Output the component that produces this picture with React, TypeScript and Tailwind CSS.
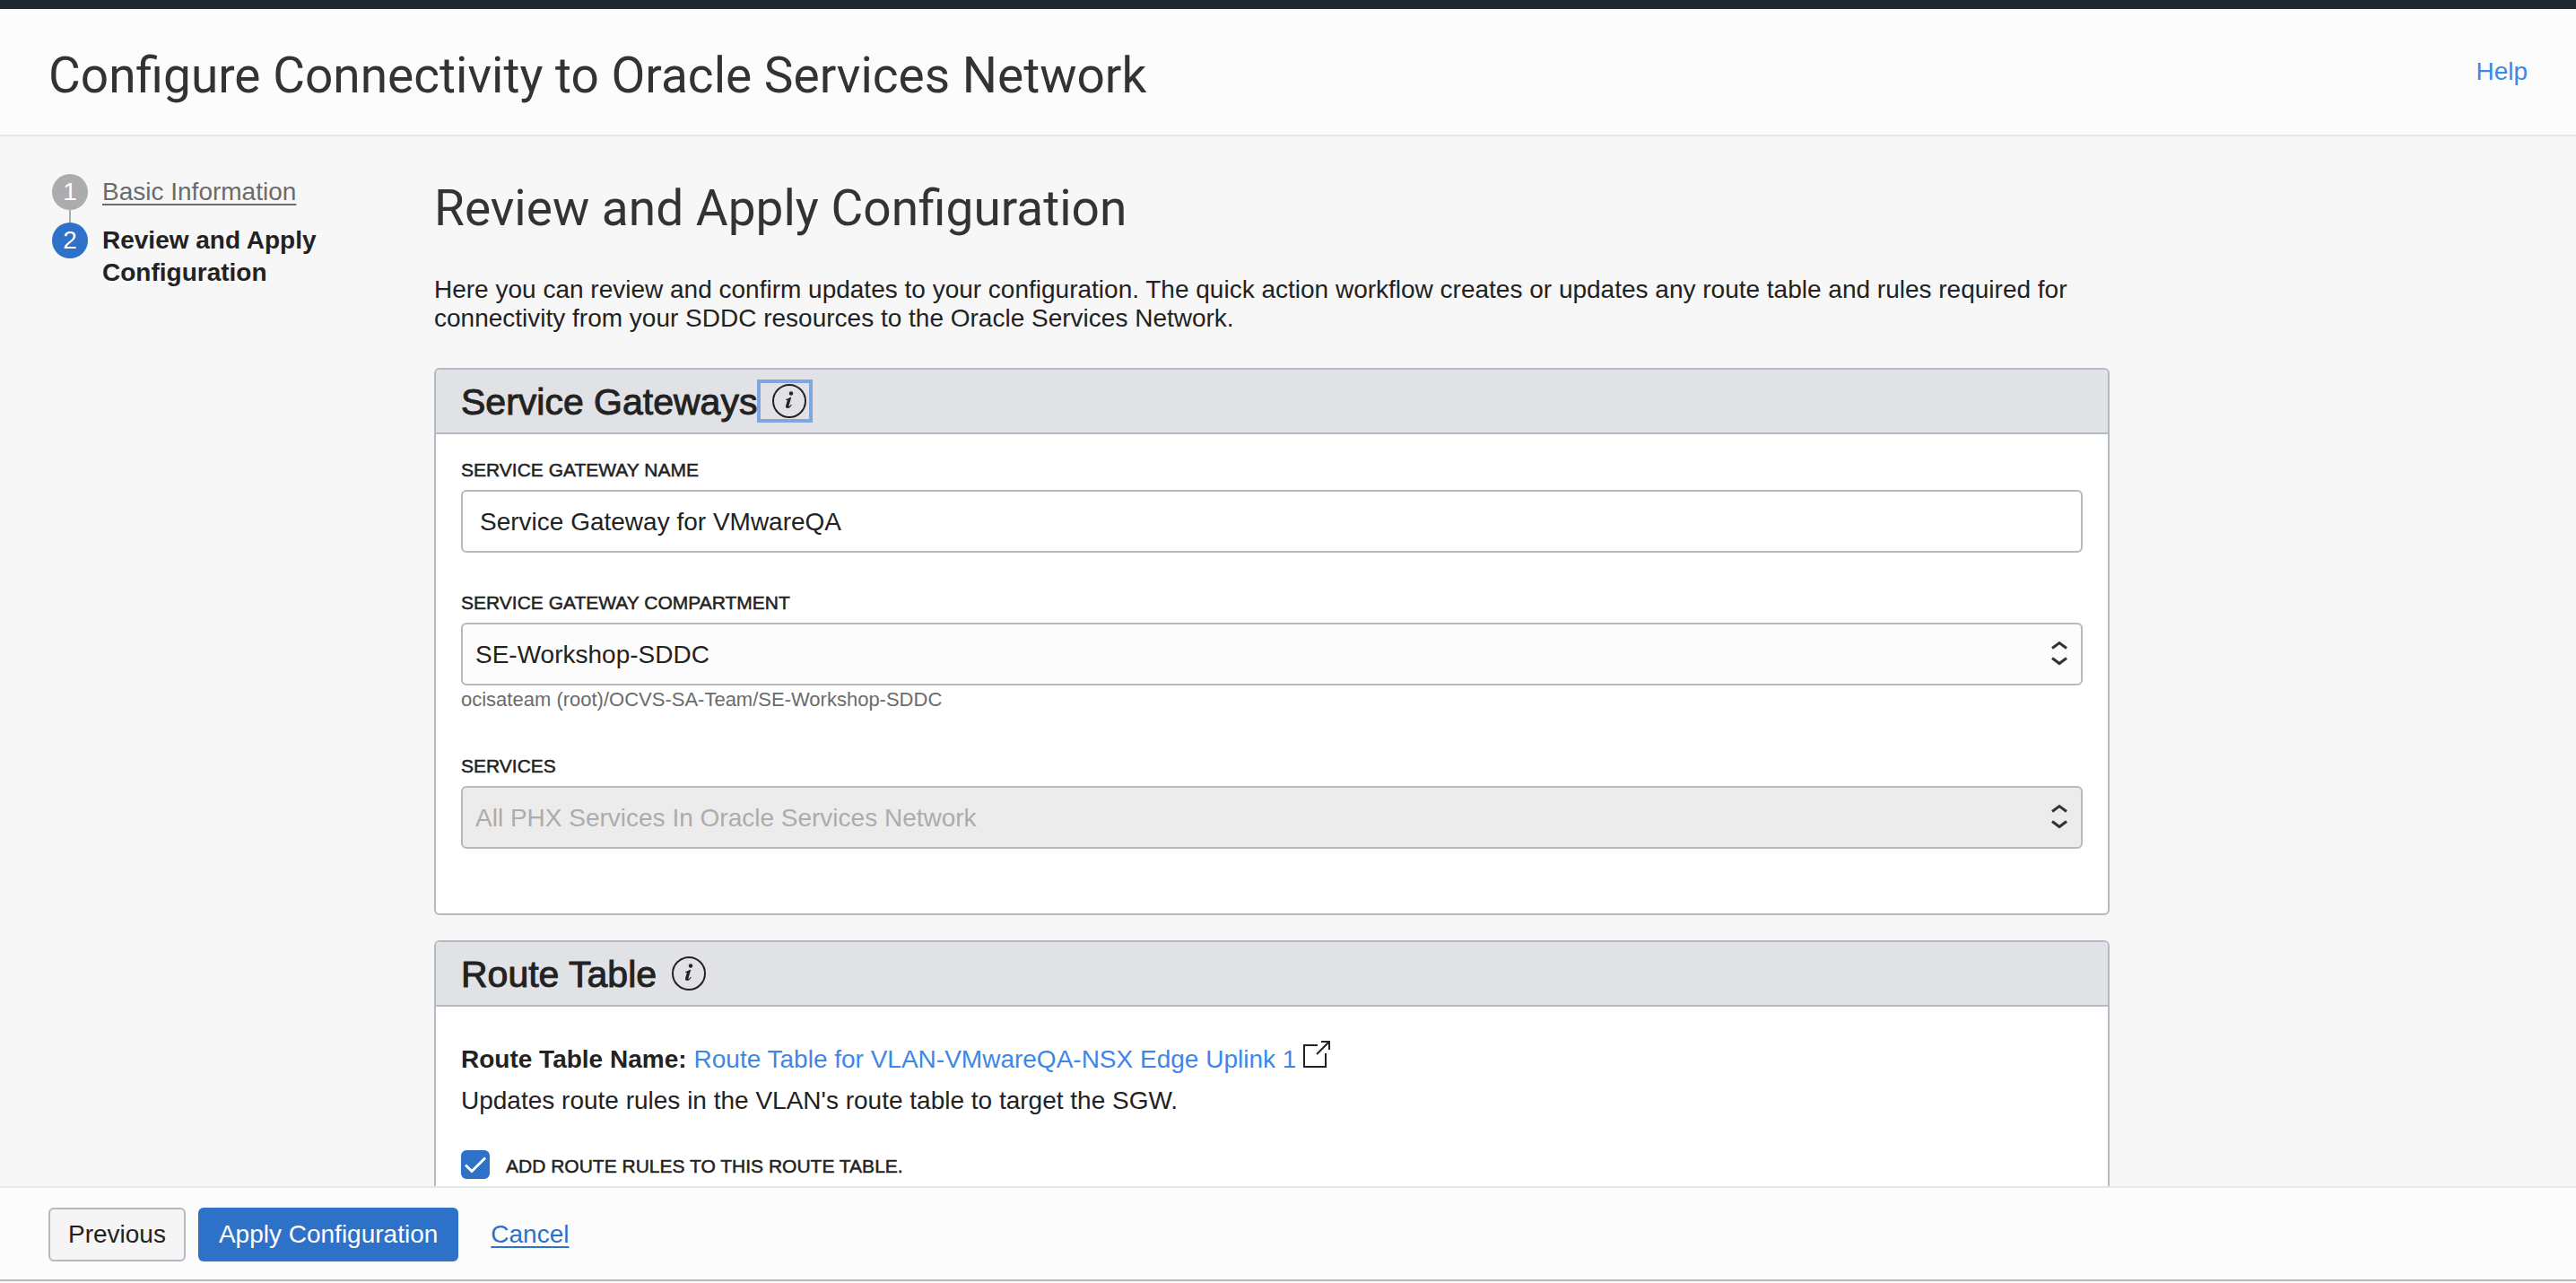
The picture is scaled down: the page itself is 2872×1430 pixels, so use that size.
import { useState, type ReactNode } from "react";

function InfoIcon() {
  return (
    <svg viewBox="0 0 40 40" className="size-10" aria-hidden="true">
      <circle cx="20" cy="20" r="18" fill="none" stroke="#222" strokeWidth="2" />
      <circle cx="22" cy="11.500" r="2.200" fill="#222" />
      <path
        d="M16 18c1.800-.3 3.500-1 5.200-2.200l1 .3-2.600 8.900c-.3 1 .1 1.100.7.7.7-.5 1.200-1.200 1.700-1.900l.8.5c-1.300 2.300-2.800 3.700-4.700 3.700-2 0-2.500-1.400-1.900-3.300l1.500-5c.2-.8-.3-1-1.700-.9z"
        fill="#222"
      />
    </svg>
  );
}

function SortArrows() {
  return (
    <svg
      viewBox="0 0 20 28"
      className="pointer-events-none absolute top-5 right-4 h-7 w-5"
      fill="none"
      stroke="#333"
      strokeWidth="3"
      aria-hidden="true"
    >
      <path d="M2 8.500l8-6 8 6M2 19.500l8 6 8-6" />
    </svg>
  );
}

function ExternalIcon() {
  return (
    <svg viewBox="0 0 30 30" className="inline-block size-[30px]" fill="none" stroke="#222" strokeWidth="2" aria-hidden="true">
      <path d="M16 5H1v24h24V14M20 1h9v9M29 1L15 15" />
    </svg>
  );
}

function Panel({ title, focused, children }: { title: string; focused?: boolean; children: ReactNode }) {
  return (
    <section className="rounded-md border-2 border-[#b4bac2] bg-white">
      <div className="flex h-[72px] items-center rounded-t-sm border-b-2 border-[#b4bac2] bg-[#e1e2e6] px-7">
        <h3 className="pt-0.5 text-[41px] leading-[48px] [-webkit-text-stroke:1px_#222]">{title}</h3>
        <button
          type="button"
          aria-label={"About " + title}
          className={
            focused
              ? "flex h-12 items-center border-4 border-[#7fa6dd] pr-0.5 pl-3"
              : "flex h-12 items-center border-4 border-transparent pr-0.5 pl-3"
          }
        >
          <InfoIcon />
        </button>
      </div>
      {children}
    </section>
  );
}

const labelClass = "mb-2 block text-[21px] leading-7 [-webkit-text-stroke:0.5px_#222]";

export default function App() {
  const [name, setName] = useState("Service Gateway for VMwareQA");
  const [addRules, setAddRules] = useState(true);
  return (
    <div className="flex h-screen flex-col bg-[#fcfcfc] pb-0.5 font-['Liberation_Sans',Arial,sans-serif] text-[28px] leading-8 text-[#222]">
      <header className="flex items-start justify-between border-t-10 border-b-2 border-t-[#1f2733] border-b-[#e6e6e6] px-[54px] pt-[42px] pb-[34px]">
        <h1 className="font-['Roboto',sans-serif] text-[55px] leading-[64px] text-[#333]">
          Configure Connectivity to Oracle Services Network
        </h1>
        <a href="#help" className="mt-3 text-[#3d87e8]">
          Help
        </a>
      </header>

      <div className="flex min-h-0 flex-1 overflow-hidden bg-[#f7f7f7]">
        <nav aria-label="Steps" className="w-[484px] shrink-0 pt-[42px] pl-[58px]">
          <ol>
            <li className="flex gap-4">
              <div className="flex flex-col items-center">
                <span className="flex size-10 items-center justify-center rounded-full bg-[#acacac] text-white">1</span>
                <span className="h-3.5 w-0.5 bg-[#acacac]" />
              </div>
              <a href="#basic" className="mt-0.5 leading-9 text-[#6b6b6b] underline decoration-2 underline-offset-4">
                Basic Information
              </a>
            </li>
            <li className="flex gap-4" aria-current="step">
              <span className="flex size-10 shrink-0 items-center justify-center rounded-full bg-[#2d71c9] text-white">2</span>
              <span className="mt-0.5 w-[260px] leading-9 font-bold">Review and Apply Configuration</span>
            </li>
          </ol>
        </nav>

        <main className="max-w-[1868px] min-w-0 flex-1 pt-12">
          <h2 className="font-['Roboto',sans-serif] text-[55px] leading-[64px] text-[#333]">Review and Apply Configuration</h2>
          <p className="mt-[43px] mb-[39px]">
            Here you can review and confirm updates to your configuration. The quick action workflow creates or updates any
            route table and rules required for connectivity from your SDDC resources to the Oracle Services Network.
          </p>

          <div className="flex flex-col gap-7">
            <Panel title="Service Gateways" focused>
              <div className="flex flex-col gap-[42px] px-7 pt-[26px] pb-[72px]">
                <div>
                  <label htmlFor="gateway-name" className={labelClass}>
                    SERVICE GATEWAY NAME
                  </label>
                  <input
                    id="gateway-name"
                    value={name}
                    onChange={(e) => setName(e.target.value)}
                    className="block h-[70px] w-full rounded-md border-2 border-[#b4bac2] bg-white px-[19px] pt-0.5"
                  />
                </div>
                <div>
                  <label htmlFor="compartment" className={labelClass}>
                    SERVICE GATEWAY COMPARTMENT
                  </label>
                  <div className="relative">
                    <select
                      id="compartment"
                      className="block h-[70px] w-full appearance-none rounded-md border-2 border-[#b4bac2] bg-[#fcfcfc] px-3.5 pt-0.5"
                    >
                      <option>SE-Workshop-SDDC</option>
                    </select>
                    <SortArrows />
                  </div>
                  <p className="pb-0.5 text-[22px] text-[#6b6b6b]">ocisateam (root)/OCVS-SA-Team/SE-Workshop-SDDC</p>
                </div>
                <div>
                  <label htmlFor="services" className={labelClass}>
                    SERVICES
                  </label>
                  <div className="relative">
                    <select
                      id="services"
                      disabled
                      className="block h-[70px] w-full appearance-none rounded-md border-2 border-[#b4bac2] bg-[#ececec] px-3.5 pt-0.5 text-[#acacac] opacity-100"
                    >
                      <option>All PHX Services In Oracle Services Network</option>
                    </select>
                    <SortArrows />
                  </div>
                </div>
              </div>
            </Panel>

            <Panel title="Route Table">
              <div className="px-7 pt-9 pb-10">
                <p className="flex items-center leading-[46px]">
                  <strong>Route Table Name:</strong>
                  <a href="#route-table" className="ml-2 text-[#3d87e8]">
                    Route Table for VLAN-VMwareQA-NSX Edge Uplink 1
                  </a>
                  <a href="#route-table" aria-label="Open in new tab" className="mb-3 ml-2 flex">
                    <ExternalIcon />
                  </a>
                </p>
                <p className="leading-[46px]">Updates route rules in the VLAN's route table to target the SGW.</p>
                <div className="mt-8 flex items-center gap-[18px]">
                  <span className="relative flex size-8">
                    <input
                      id="add-rules"
                      type="checkbox"
                      checked={addRules}
                      onChange={(e) => setAddRules(e.target.checked)}
                      className="peer size-8 appearance-none rounded-md border-2 border-[#b4bac2] checked:border-[#2d71c9] checked:bg-[#2d71c9]"
                    />
                    <svg
                      viewBox="0 0 32 32"
                      className="pointer-events-none absolute inset-0 hidden size-8 peer-checked:block"
                      fill="none"
                      stroke="#fff"
                      strokeWidth="3"
                      aria-hidden="true"
                    >
                      <path d="M5 16.500l7 7L27 8.500" />
                    </svg>
                  </span>
                  <label htmlFor="add-rules" className="pt-1 text-[21px] leading-7 [-webkit-text-stroke:0.5px_#222]">
                    ADD ROUTE RULES TO THIS ROUTE TABLE.
                  </label>
                </div>
              </div>
            </Panel>
          </div>
        </main>
      </div>

      <footer className="flex items-center border-t-2 border-b-2 border-t-[#e6e6e6] border-b-[#b4bac2] px-[54px] pt-[22px] pb-5">
        <button type="button" className="h-[60px] rounded-md border-2 border-[#b4bac2] bg-[#f5f5f5] px-5">
          Previous
        </button>
        <button type="button" className="ml-3.5 h-[60px] rounded-md bg-[#2d71c9] px-[23px] text-white">
          Apply Configuration
        </button>
        <a href="#cancel" className="ml-9 text-[#2d71c9] underline decoration-2 underline-offset-4">
          Cancel
        </a>
      </footer>
    </div>
  );
}
